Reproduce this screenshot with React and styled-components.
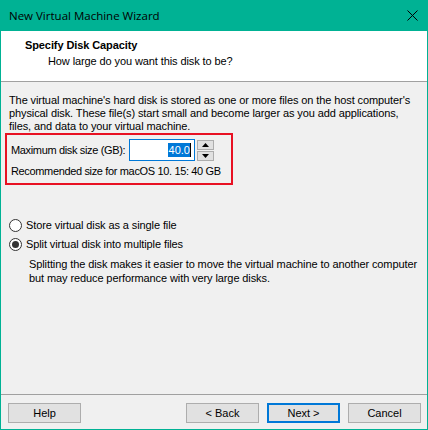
import styled, { createGlobalStyle } from "styled-components";

const GlobalStyle = createGlobalStyle`
  html, body {
    margin: 0;
    padding: 0;
    background: #f0f0f0;
  }
  * {
    box-sizing: border-box;
  }
`;

const Window = styled.div`
  width: 428px;
  height: 430px;
  display: flex;
  flex-direction: column;
  border: 1px solid #00b294;
  border-top: none;
  background: #f0f0f0;
  font-family: "Liberation Sans", Arial, sans-serif;
  font-size: 11px;
  letter-spacing: -0.1px;
  color: #000;
  white-space: nowrap;
`;

const TitleBar = styled.div`
  height: 31px;
  background: #00b294;
  display: flex;
  align-items: center;
  justify-content: space-between;
  padding: 0 10px 0 9px;
  margin: 0 -1px;
  font-family: "Open Sans", "Noto Sans", sans-serif;
  font-size: 11.5px;
  letter-spacing: 0;
  color: #000;
`;

const Header = styled.div`
  height: 51px;
  background: #fff;
  border-bottom: 1px solid #a0a0a0;
  padding: 7px 0 0 24px;
`;

const HeaderTitle = styled.div`
  font-weight: bold;
  line-height: 15px;
`;

const HeaderSub = styled.div`
  padding-left: 23px;
  line-height: 16px;
`;

const Body = styled.div`
  flex: 1;
  padding: 12px 8px 0 8px;
`;

const Para = styled.p`
  margin: 0;
  line-height: 13px;
`;

const Highlight = styled.div`
  width: 228px;
  height: 52px;
  margin: 0 0 0 -4px;
  border: 2px solid #e81123;
  padding: 4px 0 0 4px;
  display: flex;
  flex-direction: column;
  gap: 4px;
  letter-spacing: -0.35px;
`;

const Row = styled.div`
  display: flex;
  align-items: center;
`;

const Label = styled.span`
  width: 118px;
  flex-shrink: 0;
`;

const SpinInput = styled.div`
  width: 66px;
  height: 22px;
  flex-shrink: 0;
  border: 1px solid #0078d7;
  background: #fff;
  display: flex;
  align-items: center;
  justify-content: flex-end;
  padding-right: 3px;
  letter-spacing: 0;
`;

const Selected = styled.span`
  background: #0078d7;
  color: #fff;
  line-height: 14px;
  padding: 0 0 0 1px;
`;

const Caret = styled.span`
  width: 1px;
  height: 14px;
  background: #000;
`;

const SpinButtons = styled.div`
  display: flex;
  flex-direction: column;
  gap: 1px;
  margin-left: 2px;
`;

const SpinBtn = styled.div`
  width: 17px;
  height: 10px;
  border: 1px solid #adadad;
  background: #e1e1e1;
  display: flex;
  align-items: center;
  justify-content: center;
`;

const Options = styled.div`
  margin-top: 34px;
  display: flex;
  flex-direction: column;
  gap: 6px;
`;

const RadioRow = styled.label`
  display: flex;
  align-items: center;
  gap: 4px;
  line-height: 13px;
`;

const RadioCircle = styled.span`
  width: 13px;
  height: 13px;
  border-radius: 50%;
  border: 1px solid #333;
  background: #fff;
  display: flex;
  align-items: center;
  justify-content: center;
  &::after {
    content: "";
    width: 7px;
    height: 7px;
    border-radius: 50%;
    background: ${(p) => (p.$checked ? "#333" : "transparent")};
  }
`;

const Desc = styled.div`
  padding-left: 20px;
  line-height: 14px;
`;

const Footer = styled.div`
  height: 35px;
  border-top: 1px solid #a0a0a0;
  display: flex;
  align-items: flex-start;
  padding: 8px 6px 0 7px;
  gap: 8px;
`;

const Button = styled.button`
  width: 73px;
  height: 20px;
  border: ${(p) => (p.$default ? "2px solid #0078d7" : "1px solid #adadad")};
  background: #e1e1e1;
  font-family: "Liberation Sans", Arial, sans-serif;
  font-size: 11px;
  color: #000;
  padding: 0;
  margin-left: ${(p) => (p.$push ? "auto" : "0")};
`;

const Arrow = ({ down }) => (
  <svg width="7" height="4" viewBox="0 0 7 4">
    <path d={down ? "M0 0 H7 L3.5 4 Z" : "M0 4 H7 L3.5 0 Z"} fill="#000" />
  </svg>
);

export default function App() {
  return (
    <>
      <GlobalStyle />
      <Window>
        <TitleBar>
          <span>New Virtual Machine Wizard</span>
          <svg width="11" height="11" viewBox="0 0 11 11">
            <path d="M0.5 0.5 L10.5 10.5 M10.5 0.5 L0.5 10.5" stroke="#000" strokeWidth="1" />
          </svg>
        </TitleBar>
        <Header>
          <HeaderTitle>Specify Disk Capacity</HeaderTitle>
          <HeaderSub>How large do you want this disk to be?</HeaderSub>
        </Header>
        <Body>
          <Para>
            The virtual machine's hard disk is stored as one or more files on the host computer's
            <br />
            physical disk. These file(s) start small and become larger as you add applications,
            <br />
            files, and data to your virtual machine.
          </Para>
          <Highlight>
            <Row>
              <Label>Maximum disk size (GB):</Label>
              <SpinInput>
                <Selected>40.0</Selected>
                <Caret />
              </SpinInput>
              <SpinButtons>
                <SpinBtn>
                  <Arrow />
                </SpinBtn>
                <SpinBtn>
                  <Arrow down />
                </SpinBtn>
              </SpinButtons>
            </Row>
            <div>Recommended size for macOS 10. 15: 40 GB</div>
          </Highlight>
          <Options>
            <RadioRow>
              <RadioCircle />
              Store virtual disk as a single file
            </RadioRow>
            <RadioRow>
              <RadioCircle $checked />
              Split virtual disk into multiple files
            </RadioRow>
            <Desc>
              Splitting the disk makes it easier to move the virtual machine to another computer
              <br />
              but may reduce performance with very large disks.
            </Desc>
          </Options>
        </Body>
        <Footer>
          <Button>Help</Button>
          <Button $push>&lt; Back</Button>
          <Button $default>Next &gt;</Button>
          <Button>Cancel</Button>
        </Footer>
      </Window>
    </>
  );
}
